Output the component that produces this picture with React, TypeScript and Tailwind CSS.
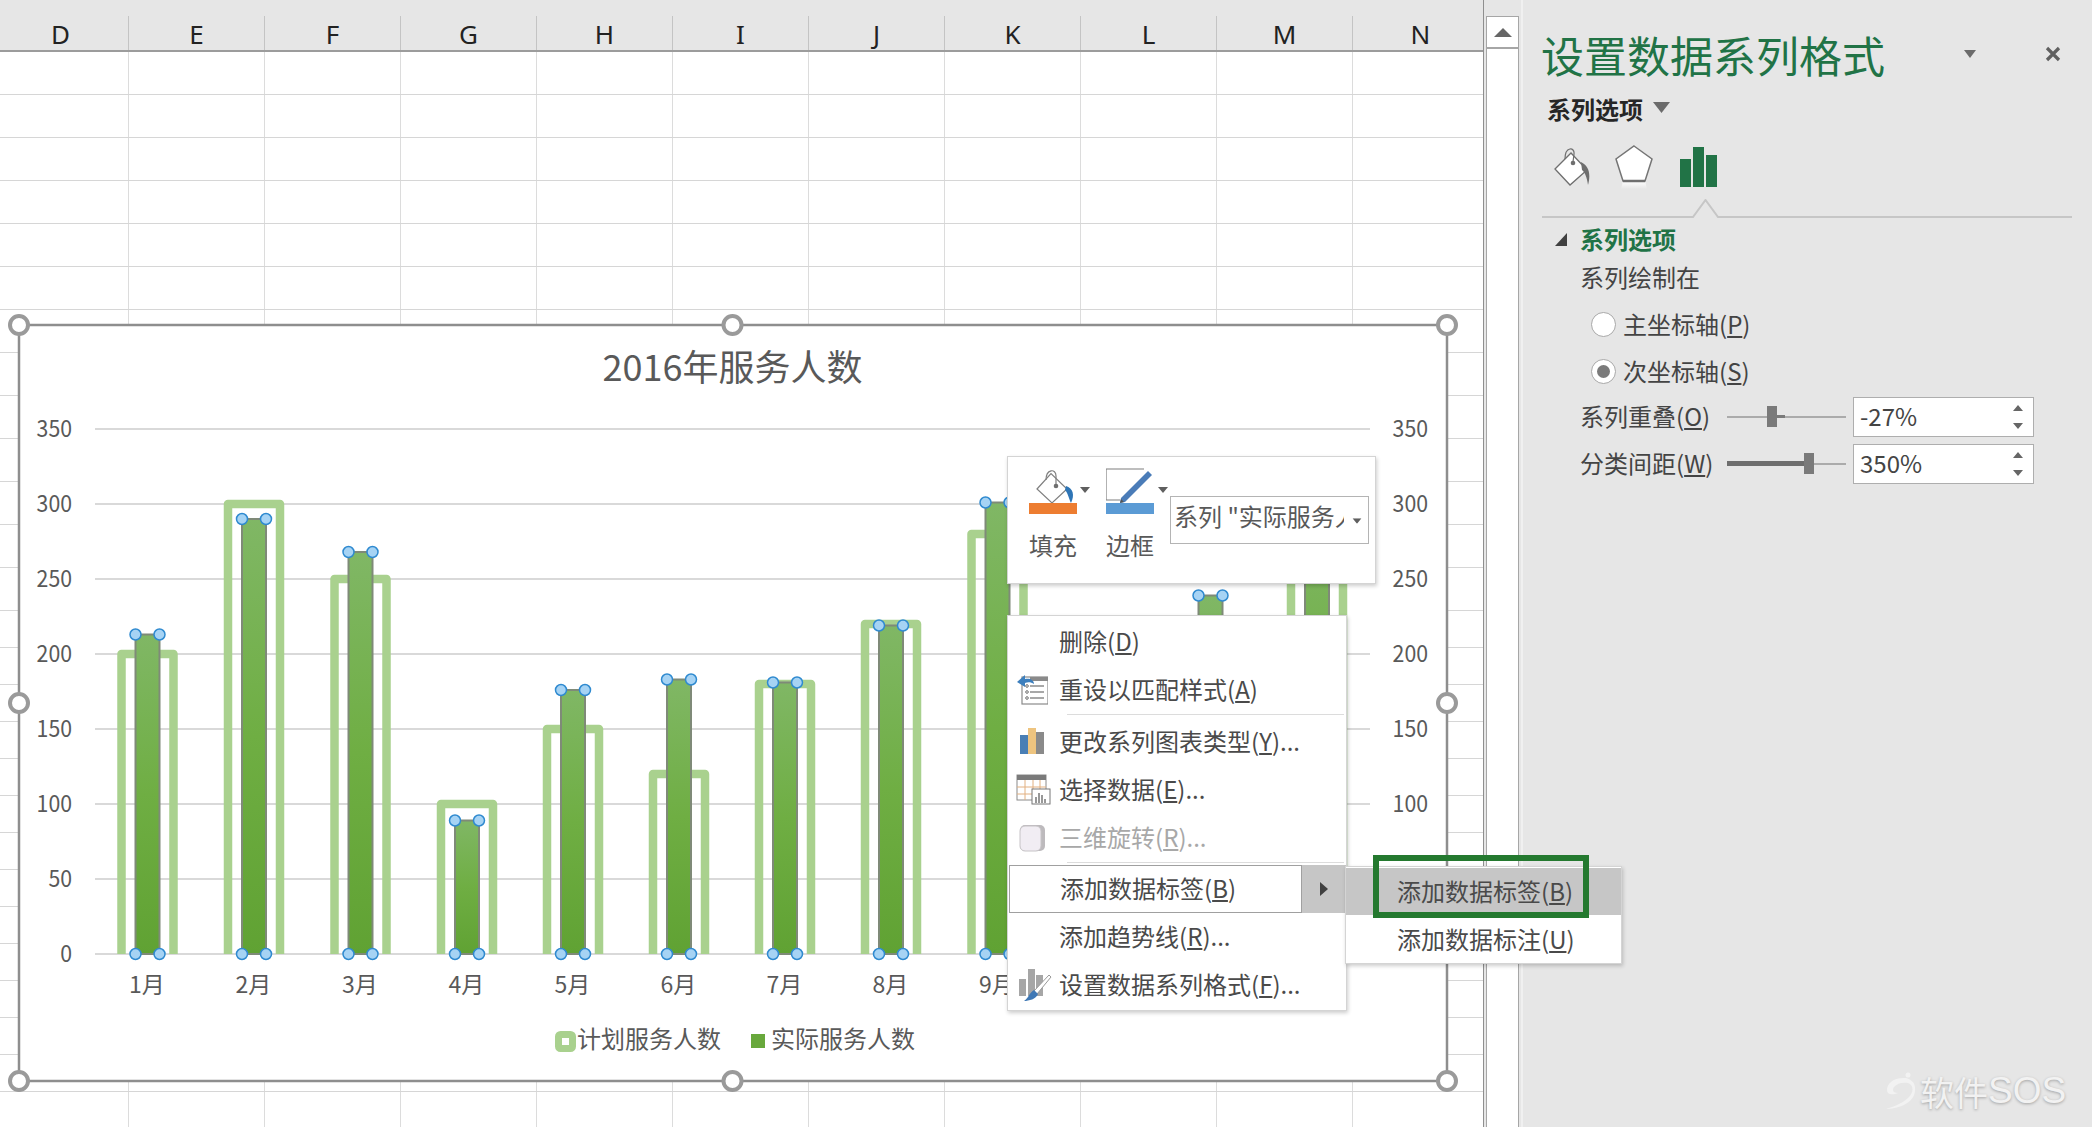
import React from "react";

const cols = ["D", "E", "F", "G", "H", "I", "J", "K", "L", "M", "N"];
const rowsTall = Array.from({ length: 13 }, (_, i) => i);
const rowsShort = Array.from({ length: 14 }, (_, i) => i);
const y = (v: number) => 954 - 1.5 * v;
const bars = [
  { m: "1月", c: 147, p: 200, a: 213 },
  { m: "2月", c: 253.5, p: 300, a: 290 },
  { m: "3月", c: 360, p: 250, a: 268 },
  { m: "4月", c: 466.5, p: 100, a: 89 },
  { m: "5月", c: 572.5, p: 150, a: 176 },
  { m: "6月", c: 678.5, p: 120, a: 183 },
  { m: "7月", c: 784.5, p: 180, a: 181 },
  { m: "8月", c: 890.5, p: 220, a: 219 },
  { m: "9月", c: 997, p: 280, a: 301 },
  { m: "", c: 1103.5, p: 180, a: 150 },
  { m: "", c: 1210, p: 190, a: 239 },
  { m: "", c: 1316.5, p: 280, a: 300 },
];
const ticks = [350, 300, 250, 200, 150, 100, 50, 0];
const handles: [number, number][] = [
  [19, 325], [732.500, 325], [1447, 325], [19, 703], [1447, 703], [19, 1081], [732.500, 1081], [1447, 1081],
];

function Chart() {
  return (
    <div className="absolute left-[19px] top-[325px] w-[1429px] h-[756px] bg-white">
      <svg className="absolute left-0 top-0 overflow-visible" width={1429} height={756} viewBox="19 325 1429 756">
        <defs>
          <linearGradient id="barFill" x1="0" y1="0" x2="0" y2="1">
            <stop offset="0" stopColor="#80b765" />
            <stop offset="0.5" stopColor="#6fae43" />
            <stop offset="1" stopColor="#60a233" />
          </linearGradient>
        </defs>
        <rect x={19} y={325} width={1428} height={756} fill="none" stroke="#8e8e8e" strokeWidth={2.5} />
        <text x={732.5} y={381} textAnchor="middle" fontSize={36} fill="#595959">2016年服务人数</text>
        {ticks.map((t) => (
          <g key={t}>
            <line x1={95} x2={1370} y1={y(t)} y2={y(t)} stroke="#d9d9d9" strokeWidth={2} />
            <text x={72} y={y(t) + 8} textAnchor="end" fontSize={23} fill="#595959" textLength={String(t).length * 11.8} lengthAdjust="spacingAndGlyphs">{t}</text>
            {t >= 100 && (
              <text x={1428} y={y(t) + 8} textAnchor="end" fontSize={23} fill="#595959" textLength={String(t).length * 11.8} lengthAdjust="spacingAndGlyphs">{t}</text>
            )}
          </g>
        ))}
        {bars.map((b) => (
          <path
            key={b.c}
            d={`M${b.c - 25.5} 954V${y(b.p)}H${b.c + 26.5}V954`}
            fill="none"
            stroke="#a9d18e"
            strokeWidth={8.5}
            strokeLinejoin="round"
          />
        ))}
        {bars.map((b) => (
          <g key={b.c}>
            <rect x={b.c - 11.5} y={y(b.a)} width={24} height={954 - y(b.a)} fill="url(#barFill)" stroke="#7f8a78" strokeWidth={2} />
            {[b.c - 11.5, b.c + 12.5].map((x) => (
              <g key={x}>
                <circle cx={x} cy={y(b.a)} r={5.5} fill="#a6d3f4" stroke="#2f8ad0" strokeWidth={1.5} />
                <circle cx={x} cy={954} r={5.5} fill="#a6d3f4" stroke="#2f8ad0" strokeWidth={1.5} />
              </g>
            ))}
            {b.m && <text x={b.c} y={993} textAnchor="middle" fontSize={23} fill="#595959">{b.m}</text>}
          </g>
        ))}
        <rect x={558.5} y={1034.5} width={14} height={14} rx={2} fill="#fff" stroke="#a9d18e" strokeWidth={7} />
        <text x={577} y={1048} fontSize={24} fill="#595959">计划服务人数</text>
        <rect x={751} y={1034} width={14} height={14} fill="#68a83c" />
        <text x={771} y={1048} fontSize={24} fill="#595959">实际服务人数</text>
        {handles.map(([cx, cy]) => (
          <circle key={`${cx}-${cy}`} cx={cx} cy={cy} r={9} fill="#fff" stroke="#9a9a9a" strokeWidth={4} />
        ))}
      </svg>
    </div>
  );
}

function Caret({ className }: { className: string }) {
  return (
    <svg className={className} width="10" height="6" viewBox="0 0 10 6">
      <path d="M0 0H10L5 6Z" fill="#5f5f5f" />
    </svg>
  );
}

function MiniToolbar() {
  return (
    <div className="absolute left-[1007px] top-[456px] w-[369px] h-[128px] bg-white border border-[#d4d4d4] shadow-[1px_2px_4px_rgba(0,0,0,0.2)] flex">
      <div className="w-[48px] ml-[21px] flex flex-col items-center">
        <svg className="mt-[11px]" width="48" height="46" viewBox="0 0 48 46">
          <path d="M8 21L22 5.500L38 21L23 35Z" fill="#fff" stroke="#7f7f7f" strokeWidth="1.200" />
          <path d="M17 12C17 1 27 0 27 8L27 17" fill="none" stroke="#7f7f7f" strokeWidth="1.200" />
          <circle cx="27" cy="18" r="2.300" fill="#6f6f6f" />
          <path d="M37 18C44 20 46 27 42 35C40 31 39 25 36 22Z" fill="#2e75b6" />
          <rect x="0" y="35" width="48" height="11" fill="#ed7d31" />
        </svg>
        <span className="mt-[15px] text-[24px] leading-[32px] text-[#595959] whitespace-nowrap">填充</span>
      </div>
      <Caret className="mt-[30px] ml-[3px]" />
      <div className="w-[48px] ml-[16px] flex flex-col items-center">
        <svg className="mt-[11px]" width="48" height="46" viewBox="0 0 48 46">
          <path d="M38 1H0V32H14" fill="none" stroke="#7f7f7f" strokeWidth="1.200" />
          <path d="M15 30L42 3L46 7L19 34L14 35Z" fill="#4a7cb8" />
          <path d="M14 35L15 31L18 34Z" fill="#555" />
          <rect x="0" y="35" width="48" height="11" fill="#5b9bd5" />
        </svg>
        <span className="mt-[15px] text-[24px] leading-[32px] text-[#595959] whitespace-nowrap">边框</span>
      </div>
      <Caret className="mt-[30px] ml-[4px]" />
      <div className="ml-[2px] mt-[39px] w-[199px] h-[48px] border border-[#b4b4b4] flex items-start pl-[3px] pt-[3px] relative">
        <span className="w-[170px] overflow-hidden whitespace-nowrap text-[24px] leading-[32px] text-[#595959]">系列 "实际服务人数"</span>
        <Caret className="ml-[8px] mt-[18px] scale-90" />
      </div>
    </div>
  );
}

function ResetIcon() {
  return (
    <svg width="32" height="32" viewBox="0 0 32 32">
      <rect x="6" y="3" width="26" height="27" fill="#fff" stroke="#8a8a8a" strokeWidth="1.200" />
      <rect x="14" y="3" width="18" height="4" fill="#8a8a8a" />
      {[12, 18, 24].map((l) => (
        <g key={l}>
          <circle cx="11" cy={l} r="1.300" fill="none" stroke="#6f6f6f" />
          <line x1="14" x2="28" y1={l} y2={l} stroke="#6f6f6f" strokeWidth="1.200" />
        </g>
      ))}
      <path d="M1 8L9 1V5C14 4 18 6 18 10C15 8 12 8 9 9V13Z" fill="#3d7fbd" />
    </svg>
  );
}
function TypeIcon() {
  return (
    <svg width="32" height="32" viewBox="0 0 32 32">
      <rect x="4" y="9" width="8" height="19" fill="#4a7fb5" />
      <rect x="12" y="2" width="8" height="26" fill="#eec47f" />
      <rect x="20" y="6" width="8" height="22" fill="#8a8a8a" />
    </svg>
  );
}
function DataIcon() {
  return (
    <svg width="36" height="32" viewBox="0 0 36 32">
      <rect x="1" y="1" width="29" height="25" fill="#fff" stroke="#8a8a8a" />
      <rect x="1" y="1" width="29" height="5" fill="#7a7a7a" />
      <path d="M1 13H30M1 20H30M9 6V26M17 6V26M24 6V26" stroke="#e2b080" strokeWidth="1" />
      <rect x="16" y="15" width="18" height="15" fill="#fff" stroke="#777" />
      <path d="M20 29V23M23 29V19M26 29V21M29 29V25" stroke="#777" strokeWidth="1.500" />
    </svg>
  );
}
function RotateIcon() {
  return (
    <svg width="32" height="32" viewBox="0 0 32 32">
      <rect x="4" y="3" width="25" height="26" rx="5" fill="#bdbabd" />
      <rect x="4" y="4" width="21" height="25" rx="5" fill="#f1edf3" stroke="#c6c3c6" />
    </svg>
  );
}
function FormatIcon() {
  return (
    <svg width="36" height="34" viewBox="0 0 36 34">
      <rect x="3" y="11" width="7" height="17" fill="#a6a6a6" />
      <rect x="12" y="1" width="7" height="27" fill="#a6a6a6" />
      <rect x="20" y="7" width="7" height="21" fill="#a6a6a6" />
      <path d="M33 7L18 23L21 26L35 9Z" fill="#fff" stroke="#999" />
      <path d="M18 22L22 26C20 31 13 33 8 33C12 31 13 25 18 22Z" fill="#3f78b5" />
    </svg>
  );
}

const U = ({ c }: { c: string }) => <span className="underline">{c}</span>;

function MenuRow({ icon, children, muted }: { icon?: React.ReactNode; children: React.ReactNode; muted?: boolean }) {
  return (
    <div className={`h-[48px] flex items-center ${muted ? "text-[#a8a8a8]" : "text-[#4a4a4a]"}`}>
      <div className="w-[51px] pl-[8px] flex justify-start items-center">{icon}</div>
      <span className="text-[24px] -mt-[2px] whitespace-nowrap">{children}</span>
    </div>
  );
}

function ContextMenu() {
  return (
    <div className="absolute left-[1007px] top-[615px] w-[340px] h-[396px] bg-white border border-[#d4d4d4] shadow-[1px_2px_4px_rgba(0,0,0,0.2)] pt-[2px]">
      <MenuRow>删除(<U c="D" />)</MenuRow>
      <MenuRow icon={<ResetIcon />}>重设以匹配样式(<U c="A" />)</MenuRow>
      <div className="ml-[59px] mr-[2px] h-[1px] bg-[#dcdcdc] mb-[3px]" />
      <MenuRow icon={<TypeIcon />}>更改系列图表类型(<U c="Y" />)...</MenuRow>
      <MenuRow icon={<DataIcon />}>选择数据(<U c="E" />)...</MenuRow>
      <MenuRow icon={<RotateIcon />} muted>三维旋转(<U c="R" />)...</MenuRow>
      <div className="ml-[59px] mr-[2px] h-[1px] bg-[#dcdcdc] mb-[2px]" />
      <div className="h-[48px] flex">
        <div className="ml-[1px] w-[293px] border border-[#a0a0a0] flex items-center pl-[50px] text-[24px] text-[#4a4a4a] whitespace-nowrap"><span className="-mt-[2px]">添加数据标签(<U c="B" />)</span></div>
        <div className="flex-1 bg-[#c6c6c6] flex items-center justify-center">
          <svg width="8" height="14" viewBox="0 0 8 14"><path d="M0 0L8 7L0 14Z" fill="#404040" /></svg>
        </div>
      </div>
      <MenuRow>添加趋势线(<U c="R" />)...</MenuRow>
      <MenuRow icon={<FormatIcon />}>设置数据系列格式(<U c="F" />)...</MenuRow>
    </div>
  );
}

function SubMenu() {
  return (
    <>
      <div className="absolute left-[1345px] top-[866px] w-[277px] h-[98px] bg-white border border-[#d4d4d4] shadow-[1px_2px_4px_rgba(0,0,0,0.2)] pt-[1px] text-[24px] text-[#4a4a4a] whitespace-nowrap">
        <div className="h-[47px] bg-[#c6c6c6] flex items-center pl-[51px]"><span className="-mt-[2px]">添加数据标签(<U c="B" />)</span></div>
        <div className="h-[48px] flex items-center pl-[51px]"><span className="-mt-[1px]">添加数据标注(<U c="U" />)</span></div>
      </div>
      <div className="absolute left-[1373px] top-[855px] w-[216px] h-[63px] border-[6px] border-[#24792f]" />
    </>
  );
}

function Radio({ on, children }: { on?: boolean; children: React.ReactNode }) {
  return (
    <div className="h-[36px] mt-[11px] first:mt-0 pl-[68px] flex items-center text-[24px] text-[#444]">
      <div className="w-[25px] h-[25px] rounded-full bg-white border border-[#a8a8a8] flex items-center justify-center">
        {on && <div className="w-[13px] h-[13px] rounded-full bg-[#7a7a7a]" />}
      </div>
      <span className="ml-[7px] whitespace-nowrap">{children}</span>
    </div>
  );
}

function Spin({ value }: { value: string }) {
  return (
    <div className="ml-[7px] w-[181px] h-[40px] bg-white border border-[#aeaeae] flex items-center pl-[6px] pr-[10px] justify-between">
      <span className="text-[24px] text-[#444] -mt-[2px]">{value}</span>
      <svg width="10" height="24" viewBox="0 0 10 24">
        <path d="M0 6L5 0L10 6Z M0 18L10 18L5 24Z" fill="#666" />
      </svg>
    </div>
  );
}

function Slider({ left, thick }: { left: number; thick: boolean }) {
  return (
    <div className="relative w-[119px] h-[22px]">
      <div className="absolute left-0 right-0 top-[10px] h-[2px] bg-[#ababab]" />
      {thick ? (
        <div className="absolute left-0 top-[8px] h-[5px] bg-[#6e6e6e]" style={{ width: left }} />
      ) : (
        <div className="absolute top-[9px] h-[3px] w-[18px] bg-[#7a7a7a]" style={{ left }} />
      )}
      <div className="absolute top-0 w-[10px] h-[21px] bg-[#7a7a7a]" style={{ left }} />
    </div>
  );
}

function Pane() {
  return (
    <div className="flex-1 flex flex-col bg-[#e6e6e6]">
      <div className="h-[54px] mt-[27px] pl-[18px] flex items-center whitespace-nowrap">
        <span className="text-[43px] leading-[54px] text-[#217346] w-[345px]">设置数据系列格式</span>
        <svg className="ml-[78px] -mt-[0px]" width="12" height="8" viewBox="0 0 12 8"><path d="M0 0H12L6 8Z" fill="#6b6b6b" /></svg>
        <svg className="ml-[69px] -mt-[0px]" width="16" height="16" viewBox="0 0 16 16"><path d="M2 2L14 14M14 2L2 14" stroke="#606060" strokeWidth="3.200" /></svg>
      </div>
      <div className="h-[32px] mt-[12px] pl-[24px] flex items-center">
        <span className="text-[24px] font-bold text-[#262626] whitespace-nowrap">系列选项</span>
        <svg className="ml-[10px] -mt-[4px]" width="17" height="11" viewBox="0 0 17 11"><path d="M0 0H17L8.500 11Z" fill="#6b6b6b" /></svg>
      </div>
      <div className="h-[44px] mt-[20px] pl-[31px] flex items-center">
        <svg width="36" height="38" viewBox="0 0 36 38">
          <path d="M1 21L17 5L33 22L16 37Z" fill="#fff" stroke="#6f6f6f" strokeWidth="1.300" />
          <path d="M11 11C11 -2 21 -1 20 6L19 14" fill="none" stroke="#6f6f6f" strokeWidth="1.200" />
          <circle cx="19" cy="15" r="2.300" fill="#6f6f6f" />
          <path d="M27 14C35 18 37 26 34 37C33 30 31 24 28 22Z" fill="#6e6e6e" />
        </svg>
        <svg className="ml-[25px]" width="38" height="44" viewBox="0 0 38 44">
          <defs>
            <linearGradient id="pentShadow" x1="0" y1="0" x2="0" y2="1">
              <stop offset="0" stopColor="#ffffff" />
              <stop offset="1" stopColor="#e6e6e6" />
            </linearGradient>
          </defs>
          <path d="M8 36L6 44H32L30 36Z" fill="url(#pentShadow)" />
          <path d="M19 1L37 14L30 36H8L1 14Z" fill="#fff" stroke="#757575" strokeWidth="1.500" />
          <path d="M8 36H30" stroke="#6f6f6f" strokeWidth="2.500" />
        </svg>
        <svg className="ml-[27px]" width="37" height="40" viewBox="0 0 37 40">
          <rect x="0" y="12" width="11" height="28" fill="#217346" />
          <rect x="13" y="0" width="11" height="40" fill="#217346" />
          <rect x="26" y="8" width="11" height="32" fill="#217346" />
        </svg>
      </div>
      <svg className="mt-[10px] ml-[19px]" width="530" height="19" viewBox="0 0 530 19">
        <path d="M0 18H151L163.500 1L176 18H530" fill="none" stroke="#c6c6c6" strokeWidth="2" />
      </svg>
      <div className="h-[30px] mt-[6px] pl-[32px] flex items-center">
        <svg width="12" height="13" viewBox="0 0 12 13"><path d="M12 0V13H0Z" fill="#404040" /></svg>
        <span className="ml-[13px] text-[24px] font-bold text-[#217346] whitespace-nowrap">系列选项</span>
      </div>
      <div className="h-[32px] mt-[7px] pl-[57px] flex items-center text-[24px] text-[#444] whitespace-nowrap">系列绘制在</div>
      <div className="mt-[13px]">
        <Radio>主坐标轴(<U c="P" />)</Radio>
        <Radio on>次坐标轴(<U c="S" />)</Radio>
      </div>
      <div className="mt-[8px] pl-[57px] flex items-center text-[24px] text-[#444] whitespace-nowrap">
        <span className="w-[147px] -mt-[2px]">系列重叠(<U c="O" />)</span>
        <Slider left={40} thick={false} />
        <Spin value="-27%" />
      </div>
      <div className="mt-[7px] pl-[57px] flex items-center text-[24px] text-[#444] whitespace-nowrap">
        <span className="w-[147px] -mt-[2px]">分类间距(<U c="W" />)</span>
        <Slider left={77} thick />
        <Spin value="350%" />
      </div>
    </div>
  );
}

export default function App() {
  return (
    <div className="relative w-[2092px] h-[1127px] overflow-hidden bg-[#e6e6e6] flex font-['Noto_Sans_CJK_SC','Noto_Sans',sans-serif]">
      <div className="w-[1484px] flex flex-col overflow-hidden border-r border-[#8f8f8f]">
        <div className="h-[52px] shrink-0 pt-[16px] flex -ml-[7px] border-b-2 border-[#9c9c9c]">
          {cols.map((c) => (
            <div key={c} className="w-[136px] shrink-0 border-r border-[#c4c4c4] flex items-center justify-center text-[26px] text-[#222] font-['Noto_Sans',sans-serif]"><span className="mt-[3px]">{c}</span></div>
          ))}
        </div>
        <div className="bg-white flex-1 overflow-hidden">
          {rowsTall.map((r) => (
            <div key={r} className="h-[43px] flex -ml-[7px] border-b border-[#d6d6d6]">
              {cols.map((c) => <div key={c} className="w-[136px] shrink-0 border-r border-[#dcdcdc]" />)}
            </div>
          ))}
          {rowsShort.map((r) => (
            <div key={r} className="h-[37px] flex -ml-[7px] border-b border-[#d6d6d6]">
              {cols.map((c) => <div key={c} className="w-[136px] shrink-0 border-r border-[#dcdcdc]" />)}
            </div>
          ))}
        </div>
      </div>
      <div className="ml-[2px] mt-[16px] w-[33px] flex flex-col bg-white border-x border-[#a6a6a6]">
        <div className="h-[33px] border-t border-b-2 border-[#a6a6a6] flex items-center justify-center">
          <svg width="18" height="9" viewBox="0 0 18 9"><path d="M0 9L9 0L18 9Z" fill="#666" /></svg>
        </div>
      </div>
      <div className="ml-[2px] w-[2px] bg-[#f0f0f0]" />
      <Pane />
      <Chart />
      <MiniToolbar />
      <ContextMenu />
      <SubMenu />
      <div className="absolute left-[1884px] top-[1070px] h-[42px] flex items-center text-[#f2f2f2] [text-shadow:0_1px_3px_rgba(0,0,0,0.3)] whitespace-nowrap">
        <svg width="32" height="40" viewBox="0 0 32 40">
          <path d="M22 7C10 6 3 12 3 19C3 24 9 24 14 22C9 22 8 19 10 16C13 12 19 11 24 12C30 14 30 22 24 27C18 33 8 36 2 38C12 38 30 33 31 20C32 12 28 9 22 7Z" fill="#f2f2f2" />
          <circle cx="24" cy="4" r="2.500" fill="#f2f2f2" />
        </svg>
        <span className="ml-[4px] text-[34px]">软件</span>
        <span className="text-[37px] font-['Liberation_Sans',sans-serif]">SOS</span>
      </div>
    </div>
  );
}
